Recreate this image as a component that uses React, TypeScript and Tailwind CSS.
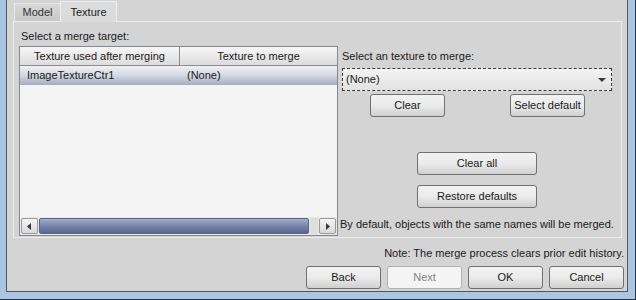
const font = "font-['Liberation_Sans',Arial,sans-serif]";

function Btn({ label, w = "w-[75px]", disabled = false }: { label: string; w?: string; disabled?: boolean }) {
  return (
    <div
      className={`${w} h-[23px] flex items-center justify-center rounded-[3px] border text-[11px] ${
        disabled
          ? "border-[#adb2b5] bg-[#f4f4f4] text-[#838383]"
          : "border-[#707070] bg-gradient-to-b from-[#f2f2f2] via-[#ebebeb] to-[#d0d0d0] text-[#1a1a1a]"
      }`}
    >
      {label}
    </div>
  );
}

function Arrow({ dir }: { dir: "left" | "right" }) {
  return (
    <div className="w-[17px] h-full flex items-center justify-center border border-[#9a9a9a] rounded-[2px] bg-gradient-to-b from-[#f4f4f4] to-[#d9d9d9]">
      <svg width="4" height="7" viewBox="0 0 4 7">
        {dir === "left" ? <path d="M4 0 L0 3.5 L4 7 Z" fill="#3a3a3a" /> : <path d="M0 0 L4 3.5 L0 7 Z" fill="#3a3a3a" />}
      </svg>
    </div>
  );
}

export default function App() {
  return (
    <div className={`w-[636px] h-[300px] bg-[#a9c6e4] pl-[6px] pr-[7px] pb-[7px] border-r border-b border-[#2c3440] ${font}`}>
      <div className="h-full bg-[#d4d4d4] border-l border-r border-b border-[#4b5563] flex flex-col">
        {/* tabs */}
        <div className="flex items-end h-[21px] pl-[7px]">
          <div className="w-[46px] h-[18px] flex items-center justify-center text-[11px] text-[#333] bg-gradient-to-b from-[#d8d8d8] to-[#c8c8c8] border-t border-l border-[#e6e6e6]">
            Model
          </div>
          <div className="w-[57px] h-[21px] -mb-px flex items-center justify-center text-[11px] text-[#1a1a1a] bg-[#dbdbdb] border-t border-l border-r border-[#ededed] relative z-10">
            Texture
          </div>
        </div>
        {/* panel */}
        <div className="ml-[6px] mr-[5px] h-[217px] border border-[#ececec] flex pl-[5px] pt-[7px]">
          <div className="w-[319px] flex flex-col">
            <div className="text-[11px] h-[14px] leading-[14px] ml-[2px] text-[#1a1a1a]">Select a merge target:</div>
            <div className="mt-[3px] h-[190px] border border-[#828790] bg-[#f4f4f4] flex flex-col">
              <div className="h-[19px] flex text-[11px] text-[#1a1a1a] bg-gradient-to-b from-[#f7f7f7] to-[#dcdcdc] border-b border-[#8c8c8c]">
                <div className="w-[160px] flex items-center justify-center border-r border-[#8c8c8c]">Texture used after merging</div>
                <div className="flex-1 flex items-center justify-center">Texture to merge</div>
              </div>
              <div className="h-[19px] flex items-center text-[11px] text-[#1a1a1a] bg-gradient-to-b from-[#f0f1f5] via-[#d4d8e3] to-[#a5acc2]">
                <div className="w-[160px] pl-[7px]">ImageTextureCtr1</div>
                <div className="pl-[7px]">(None)</div>
              </div>
              <div className="flex-1" />
              <div className="h-[18px] flex bg-[#e9e9e9] p-px gap-px">
                <Arrow dir="left" />
                <div className="w-[273px] h-full rounded-[2px] border border-[#5a6484] bg-gradient-to-b from-[#a3aecd] via-[#7885aa] to-[#5b678c]" />
                <div className="w-[8px] h-full bg-[#dedede]" />
                <Arrow dir="right" />
              </div>
            </div>
          </div>
          <div className="flex-1 flex flex-col pl-[4px] pt-[20px] text-[11px] text-[#1a1a1a]">
            <div className="h-[14px] leading-[14px]">Select an texture to merge:</div>
            <div className="mt-[5px] w-[270px] h-[23px] border border-dashed border-[#3a3a3a] bg-gradient-to-b from-[#f3f3f3] to-[#e2e2e2] flex items-center justify-between pl-[3px] pr-[5px]">
              <span>(None)</span>
              <svg width="8" height="4" viewBox="0 0 8 4">
                <path d="M0 0 L8 0 L4 4 Z" fill="#3a3a3a" />
              </svg>
            </div>
            <div className="mt-[3px] flex">
              <div className="ml-[28px]">
                <Btn label="Clear" />
              </div>
              <div className="ml-[65px]">
                <Btn label="Select default" />
              </div>
            </div>
            <div className="mt-[35px] ml-[75px]">
              <Btn label="Clear all" w="w-[120px]" />
            </div>
            <div className="mt-[10px] ml-[75px]">
              <Btn label="Restore defaults" w="w-[120px]" />
            </div>
            <div className="mt-[9px] -ml-[2px] h-[14px] leading-[14px] whitespace-nowrap">By default, objects with the same names will be merged.</div>
          </div>
        </div>
        {/* footer */}
        <div className="mt-[8px] mr-[3px] text-right text-[11px] h-[14px] leading-[14px] text-[#1a1a1a]">
          Note: The merge process clears prior edit history.
        </div>
        <div className="mt-[6px] flex justify-end gap-[6px] mr-[3px]">
          <Btn label="Back" />
          <Btn label="Next" disabled />
          <Btn label="OK" />
          <Btn label="Cancel" />
        </div>
      </div>
    </div>
  );
}
